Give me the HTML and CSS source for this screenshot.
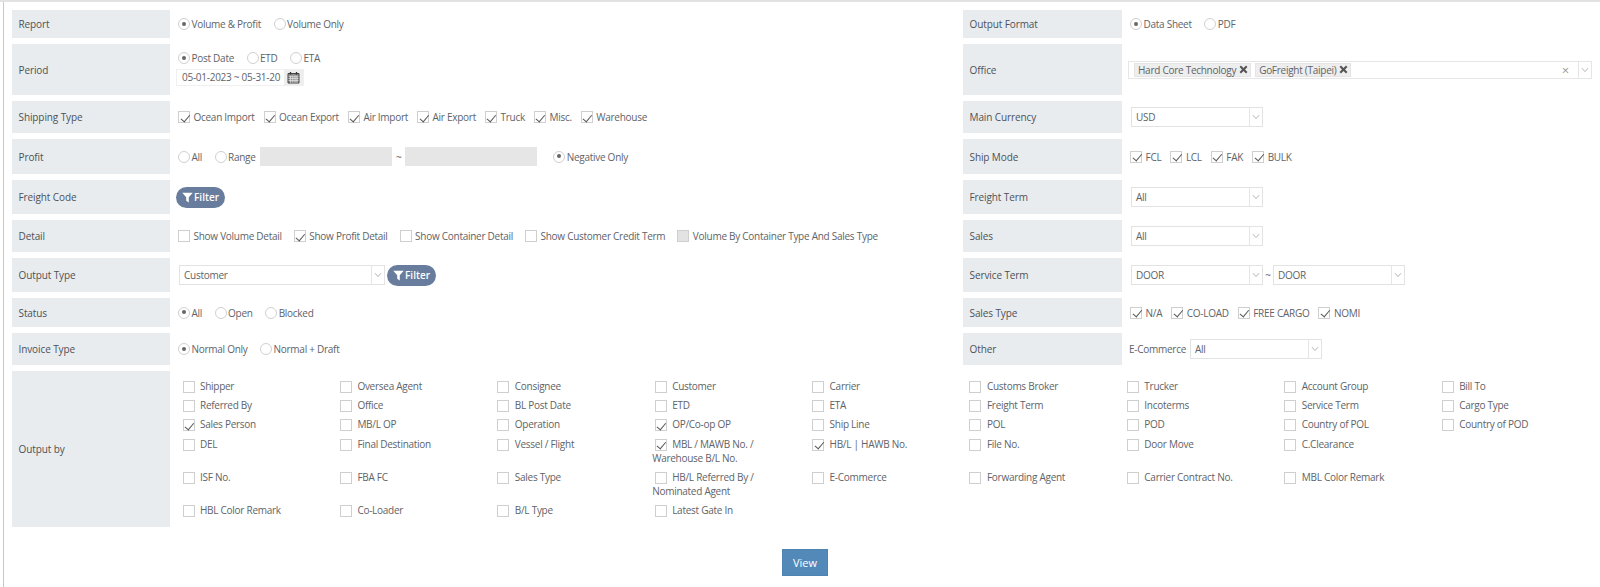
FILE: index.html
```html
<!DOCTYPE html>
<html lang="en">
<head>
<meta charset="utf-8">
<title>Report</title>
<link rel="stylesheet" href="styles.css">
</head>
<body>
<svg class="defs" width="0" height="0" aria-hidden="true">
  <symbol id="chev" viewBox="0 0 8 6"><path d="M1 1.2 4 4.6 7 1.2" fill="none" stroke="#b5b5b5" stroke-width="1"/></symbol>
  <symbol id="funnel" viewBox="0 0 12 12"><path d="M.3 .8h11.4L7.4 5.8V11.4L4.6 9.6V5.8z" fill="#fff"/></symbol>
  <symbol id="x" viewBox="0 0 10 10"><path d="M2.2 .6 5 3.3 7.8 .6 9.4 2.2 6.7 5 9.4 7.8 7.8 9.4 5 6.7 2.2 9.4 .6 7.8 3.3 5 .6 2.2z" fill="#555"/></symbol>
</svg>
<main class="page">
<form class="form">
  <div class="label">Report</div>
  <div class="cell opts">
    <label class="opt on"><i class="radio"></i>Volume &amp; Profit</label>
    <label class="opt"><i class="radio"></i>Volume Only</label>
  </div>
  <div class="label">Output Format</div>
  <div class="cell opts">
    <label class="opt on"><i class="radio"></i>Data Sheet</label>
    <label class="opt"><i class="radio"></i>PDF</label>
  </div>

  <div class="label">Period</div>
  <div class="cell stack">
    <div class="opts">
      <label class="opt on"><i class="radio"></i>Post Date</label>
      <label class="opt"><i class="radio"></i>ETD</label>
      <label class="opt"><i class="radio"></i>ETA</label>
    </div>
    <div class="date">
      <span class="date-text">05-01-2023 ~ 05-31-20</span>
      <span class="date-addon">
        <svg width="13" height="13" viewBox="0 0 13 13"><path d="M1 2.5h11V12H1z" fill="#888" stroke="#444"/><path d="M1.5 5.2h10M1.5 7.4h10M1.5 9.6h10M3.6 5v7M5.8 5v7M8 5v7M10 5v7" stroke="#eee" stroke-width=".7"/><path d="M3.5 1v2.6M9.5 1v2.6" stroke="#333" stroke-width="1.3"/></svg>
      </span>
    </div>
  </div>
  <div class="label">Office</div>
  <div class="cell opts">
    <div class="multi">
      <span class="tag">Hard Core Technology<svg class="tag-x"><use href="#x"/></svg></span>
      <span class="tag">GoFreight (Taipei)<svg class="tag-x"><use href="#x"/></svg></span>
      <span class="multi-clear">×</span>
      <span class="multi-arrow"><svg width="8" height="6"><use href="#chev"/></svg></span>
    </div>
  </div>

  <div class="label">Shipping Type</div>
  <div class="cell opts checks">
    <label class="opt on"><i class="box"></i>Ocean Import</label>
    <label class="opt on"><i class="box"></i>Ocean Export</label>
    <label class="opt on"><i class="box"></i>Air Import</label>
    <label class="opt on"><i class="box"></i>Air Export</label>
    <label class="opt on"><i class="box"></i>Truck</label>
    <label class="opt on"><i class="box"></i>Misc.</label>
    <label class="opt on"><i class="box"></i>Warehouse</label>
  </div>
  <div class="label">Main Currency</div>
  <div class="cell opts">
    <div class="select">USD<span class="arrow"><svg width="8" height="6"><use href="#chev"/></svg></span></div>
  </div>

  <div class="label">Profit</div>
  <div class="cell opts">
    <label class="opt"><i class="radio"></i>All</label>
    <label class="opt range"><i class="radio"></i>Range</label>
    <span class="ginput"></span>
    <span class="tilde">~</span>
    <span class="ginput"></span>
    <label class="opt on negative"><i class="radio"></i>Negative Only</label>
  </div>
  <div class="label">Ship Mode</div>
  <div class="cell opts checks">
    <label class="opt on"><i class="box"></i>FCL</label>
    <label class="opt on"><i class="box"></i>LCL</label>
    <label class="opt on"><i class="box"></i>FAK</label>
    <label class="opt on"><i class="box"></i>BULK</label>
  </div>

  <div class="label">Freight Code</div>
  <div class="cell opts">
    <button type="button" class="filter"><svg width="11" height="11"><use href="#funnel"/></svg>Filter</button>
  </div>
  <div class="label">Freight Term</div>
  <div class="cell opts">
    <div class="select">All<span class="arrow"><svg width="8" height="6"><use href="#chev"/></svg></span></div>
  </div>

  <div class="label">Detail</div>
  <div class="cell opts checks detail">
    <label class="opt"><i class="box"></i>Show Volume Detail</label>
    <label class="opt on"><i class="box"></i>Show Profit Detail</label>
    <label class="opt"><i class="box"></i>Show Container Detail</label>
    <label class="opt"><i class="box"></i>Show Customer Credit Term</label>
    <label class="opt off"><i class="box"></i>Volume By Container Type And Sales Type</label>
  </div>
  <div class="label">Sales</div>
  <div class="cell opts">
    <div class="select">All<span class="arrow"><svg width="8" height="6"><use href="#chev"/></svg></span></div>
  </div>

  <div class="label">Output Type</div>
  <div class="cell opts">
    <div class="select wide">Customer<span class="arrow"><svg width="8" height="6"><use href="#chev"/></svg></span></div>
    <button type="button" class="filter near"><svg width="11" height="11"><use href="#funnel"/></svg>Filter</button>
  </div>
  <div class="label">Service Term</div>
  <div class="cell opts">
    <div class="select">DOOR<span class="arrow"><svg width="8" height="6"><use href="#chev"/></svg></span></div>
    <span class="tilde small">~</span>
    <div class="select flush">DOOR<span class="arrow"><svg width="8" height="6"><use href="#chev"/></svg></span></div>
  </div>

  <div class="label">Status</div>
  <div class="cell opts">
    <label class="opt on"><i class="radio"></i>All</label>
    <label class="opt"><i class="radio"></i>Open</label>
    <label class="opt"><i class="radio"></i>Blocked</label>
  </div>
  <div class="label">Sales Type</div>
  <div class="cell opts checks">
    <label class="opt on"><i class="box"></i>N/A</label>
    <label class="opt on"><i class="box"></i>CO-LOAD</label>
    <label class="opt on"><i class="box"></i>FREE CARGO</label>
    <label class="opt on"><i class="box"></i>NOMI</label>
  </div>

  <div class="label">Invoice Type</div>
  <div class="cell opts">
    <label class="opt on"><i class="radio"></i>Normal Only</label>
    <label class="opt"><i class="radio"></i>Normal + Draft</label>
  </div>
  <div class="label">Other</div>
  <div class="cell opts other">
    <span class="other-text">E-Commerce</span>
    <div class="select flush">All<span class="arrow"><svg width="8" height="6"><use href="#chev"/></svg></span></div>
  </div>

  <div class="label">Output by</div>
  <div class="cell outputs">
    <label class="item"><i class="box"></i>Shipper</label>
    <label class="item"><i class="box"></i>Oversea Agent</label>
    <label class="item"><i class="box"></i>Consignee</label>
    <label class="item"><i class="box"></i>Customer</label>
    <label class="item"><i class="box"></i>Carrier</label>
    <label class="item"><i class="box"></i>Customs Broker</label>
    <label class="item"><i class="box"></i>Trucker</label>
    <label class="item"><i class="box"></i>Account Group</label>
    <label class="item"><i class="box"></i>Bill To</label>

    <label class="item"><i class="box"></i>Referred By</label>
    <label class="item"><i class="box"></i>Office</label>
    <label class="item"><i class="box"></i>BL Post Date</label>
    <label class="item"><i class="box"></i>ETD</label>
    <label class="item"><i class="box"></i>ETA</label>
    <label class="item"><i class="box"></i>Freight Term</label>
    <label class="item"><i class="box"></i>Incoterms</label>
    <label class="item"><i class="box"></i>Service Term</label>
    <label class="item"><i class="box"></i>Cargo Type</label>

    <label class="item on"><i class="box"></i>Sales Person</label>
    <label class="item"><i class="box"></i>MB/L OP</label>
    <label class="item"><i class="box"></i>Operation</label>
    <label class="item on"><i class="box"></i>OP/Co-op OP</label>
    <label class="item"><i class="box"></i>Ship Line</label>
    <label class="item"><i class="box"></i>POL</label>
    <label class="item"><i class="box"></i>POD</label>
    <label class="item"><i class="box"></i>Country of POL</label>
    <label class="item"><i class="box"></i>Country of POD</label>

    <label class="item"><i class="box"></i>DEL</label>
    <label class="item"><i class="box"></i>Final Destination</label>
    <label class="item"><i class="box"></i>Vessel / Flight</label>
    <label class="item on"><i class="box"></i>MBL / MAWB No. / Warehouse B/L No.</label>
    <label class="item on"><i class="box"></i>HB/L | HAWB No.</label>
    <label class="item"><i class="box"></i>File No.</label>
    <label class="item"><i class="box"></i>Door Move</label>
    <label class="item"><i class="box"></i>C.Clearance</label>
    <span class="item-empty"></span>

    <label class="item"><i class="box"></i>ISF No.</label>
    <label class="item"><i class="box"></i>FBA FC</label>
    <label class="item"><i class="box"></i>Sales Type</label>
    <label class="item"><i class="box"></i>HB/L Referred By / Nominated Agent</label>
    <label class="item"><i class="box"></i>E-Commerce</label>
    <label class="item"><i class="box"></i>Forwarding Agent</label>
    <label class="item"><i class="box"></i>Carrier Contract No.</label>
    <label class="item"><i class="box"></i>MBL Color Remark</label>
    <span class="item-empty"></span>

    <label class="item"><i class="box"></i>HBL Color Remark</label>
    <label class="item"><i class="box"></i>Co-Loader</label>
    <label class="item"><i class="box"></i>B/L Type</label>
    <label class="item"><i class="box"></i>Latest Gate In</label>
  </div>
</form>
<div class="actions"><button type="button" class="view">View</button></div>
</main>
</body>
</html>
```
FILE: styles.css
```css
* { box-sizing: border-box; }
html, body { margin: 0; padding: 0; height: 587px; overflow: hidden; background: #fff; }
body {
  border-top: 2px solid #e2e2e2;
  font-family: "Open Sans", "Liberation Sans", sans-serif;
  font-size: 10px;
  letter-spacing: -.27px;
  line-height: 14px;
  color: #606368;
}
.defs { position: absolute; }
.page {
  margin-left: 3px;
  height: 585px;
  padding: 8px 0 0 8px;
  border-left: 1.5px solid #c9c9c9;
}
.form {
  display: grid;
  grid-template-columns: 158px 793px 159px 1fr;
  grid-template-rows: 28px 51px 32px 35px 34px 32px 34px 29px 32px 156px;
  row-gap: 6px;
}
.label {
  display: flex;
  align-items: center;
  padding-left: 6.5px;
  background: #e9ecef;
  color: #4d5157;
  letter-spacing: -.1px;
}
.cell { min-width: 0; padding-left: 8px; }
.opts { display: flex; align-items: center; gap: 12.5px; }
.stack { display: flex; flex-direction: column; gap: 4px; padding-top: 7px; }
.opt { display: flex; align-items: center; white-space: nowrap; }
.checks { gap: 9px; }
.detail { gap: 12px; }
.radio {
  position: relative;
  flex: none;
  width: 12px;
  height: 12px;
  margin-right: 1.5px;
  border: 1.2px solid #d0d0d0;
  border-radius: 50%;
  background: #fff;
}
.on > .radio::after {
  content: "";
  position: absolute;
  left: 2.8px;
  top: 2.8px;
  width: 4px;
  height: 4px;
  border-radius: 50%;
  background: #666;
}
.box {
  position: relative;
  flex: none;
  display: inline-block;
  width: 12px;
  height: 12px;
  margin-right: 3.5px;
  border: 1px solid #cfcfcf;
  background: #fff;
}
.on > .box::after {
  content: "";
  position: absolute;
  left: 3.5px;
  top: .5px;
  width: 4px;
  height: 7.5px;
  border: solid #555;
  border-width: 0 1.3px 1.3px 0;
  transform: rotate(40deg);
}
.off > .box { background: #e3e3e3; }
.date {
  display: flex;
  width: 128px;
  height: 17px;
  margin-left: -2px;
  border: 1px solid #f0f0f0;
}
.date-text { flex: 1; padding-left: 5px; white-space: nowrap; }
.date-addon { display: flex; align-items: center; justify-content: center; width: 19px; flex: none; background: #eee; }
.multi {
  position: relative;
  display: flex;
  align-items: center;
  gap: 4px;
  width: 464px;
  height: 18px;
  margin-left: -2px;
  padding-left: 5px;
  border: 1px solid #e6e6e6;
}
.tag {
  display: flex;
  align-items: center;
  gap: 3px;
  height: 14px;
  padding: 0 2px 0 3px;
  background: #eee;
  border: 1px solid #e4e4e4;
  white-space: nowrap;
}
.tag-x { width: 9px; height: 9px; }
.multi-clear { margin-left: auto; margin-right: 5px; font-size: 13px; color: #999; }
.multi-arrow {
  display: flex;
  align-items: center;
  justify-content: center;
  width: 13px;
  height: 100%;
  border-left: 1px solid #e6e6e6;
}
.select {
  display: flex;
  align-items: center;
  justify-content: space-between;
  width: 132px;
  height: 20px;
  margin-left: 1px;
  padding-left: 4px;
  border: 1.5px solid #e3e3e3;
  background: #fff;
  white-space: nowrap;
}
.select.wide { width: 206px; }
.select.flush { margin-left: 0; }
.arrow {
  display: flex;
  align-items: center;
  justify-content: center;
  width: 13px;
  height: 100%;
  border-left: 1px solid #e6e6e6;
}
.ginput { width: 132px; height: 19px; background: #e6e6e6; flex: none; }
.tilde { width: 13px; margin: 0 -12.5px; text-align: center; }
.tilde.small { width: 10px; margin: 0 -12.5px; }
.negative { margin-left: 3.5px; }
.range { margin-right: -8px; }
.filter {
  display: inline-flex;
  align-items: center;
  justify-content: center;
  gap: 1px;
  width: 49px;
  height: 21px;
  margin-left: -2px;
  padding: 0;
  border: 0;
  border-radius: 11px;
  background: #687d9d;
  color: #fff;
  font: inherit;
  letter-spacing: 0;
  font-weight: 600;
}
.filter.near { margin-left: -10.5px; }
.other { gap: 4px; padding-left: 7px; }
.other-text { white-space: nowrap; }
.outputs {
  grid-column: 2 / 5;
  display: grid;
  grid-template-columns: repeat(9, 157.4px);
  align-content: start;
  row-gap: 5px;
  padding: 8px 0 0 10px;
  line-height: 14.2px;
}
.item { display: block; padding-right: 28px; }
.item > .box { margin: 0 5.5px 0 2.5px; vertical-align: -3px; }
.actions { display: flex; justify-content: center; padding: 22px 2px 0 0; }
.view {
  width: 46px;
  height: 27px;
  padding: 0;
  border: 1px solid #4f83b0;
  background: #5389b8;
  color: #fff;
  font: inherit;
  font-size: 11px;
}
```
